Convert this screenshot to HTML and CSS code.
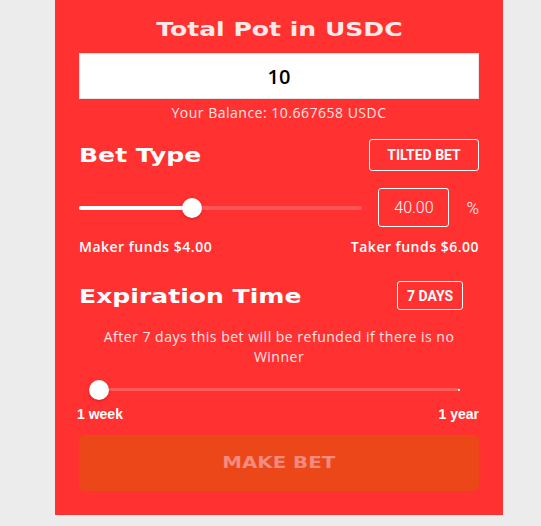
FILE: index.html
```html
<!DOCTYPE html>
<html>
<head>
<meta charset="utf-8">
<link rel="stylesheet" href="styles.css">
</head>
<body>
<div class="panel">
  <h1 class="title"><span class="wide">Total Pot in USDC</span></h1>
  <div class="pot-input">10</div>
  <div class="balance">Your Balance: 10.667658 USDC</div>

  <div class="row head-row bet-row">
    <h2 class="heading"><span class="wide">Bet Type</span></h2>
    <div class="chip chip-tilted">TILTED BET</div>
  </div>

  <div class="row slider-row">
    <div class="slider slider-main">
      <div class="track"></div>
      <div class="fill" style="width:40%"></div>
      <div class="thumb" style="left:40%"></div>
    </div>
    <div class="pct-input">40.00</div>
    <div class="pct">%</div>
  </div>

  <div class="row funds">
    <span>Maker funds $4.00</span>
    <span>Taker funds $6.00</span>
  </div>

  <div class="row head-row exp-row">
    <h2 class="heading"><span class="wide">Expiration Time</span></h2>
    <div class="chip chip-days">7 DAYS</div>
  </div>

  <p class="note">After 7 days this bet will be refunded if there is no Winner</p>

  <div class="slider slider-exp">
    <div class="track"></div>
    <div class="mark" style="left:100%"></div>
    <div class="thumb" style="left:0%"></div>
  </div>

  <div class="row range-labels">
    <span>1 week</span>
    <span>1 year</span>
  </div>

  <button class="make-bet"><span class="wide">MAKE BET</span></button>
</div>
</body>
</html>
```

FILE: styles.css
```css
* { box-sizing: border-box; }

html, body {
  margin: 0;
  padding: 0;
  background: #ececec;
}

.panel {
  margin-left: 55px;
  width: 448px;
  height: 515px;
  background: #ff3131;
  padding: 16px 24px 0 24px;
  display: flex;
  flex-direction: column;
  font-family: "Open Sans", "DejaVu Sans", sans-serif;
  letter-spacing: 0.5px;
  color: #fff;
}

.wide {
  display: inline-block;
  letter-spacing: 0;
  transform: scaleX(1.32);
  transform-origin: left center;
}

.title {
  margin: 0;
  text-align: center;
  font-family: "DejaVu Sans", sans-serif;
  font-weight: 700;
  font-size: 19px;
  line-height: 26px;
  color: #fbe9e9;
}

.title .wide {
  transform-origin: center center;
}

.pot-input {
  margin-top: 11px;
  height: 46px;
  background: #fff;
  border: 1px solid #e4e4e4;
  color: #000;
  font-family: "Open Sans", sans-serif;
  font-weight: 600;
  font-size: 20px;
  letter-spacing: 0;
  display: flex;
  align-items: center;
  justify-content: center;
}

.balance {
  margin-top: 4px;
  text-align: center;
  font-size: 14px;
  line-height: 20px;
  font-weight: 500;
  color: #ffe5e5;
}

.row {
  display: flex;
  align-items: center;
  justify-content: space-between;
}

.bet-row {
  margin-top: 16px;
  height: 32px;
}

.heading {
  margin: 0;
  font-family: "DejaVu Sans", sans-serif;
  font-weight: 700;
  font-size: 19px;
  line-height: 24px;
  color: #fff;
}

.chip {
  border: 1px solid #fff;
  border-radius: 3px;
  font-family: Roboto, sans-serif;
  font-weight: 700;
  font-size: 14px;
  letter-spacing: 0;
  display: flex;
  align-items: center;
  justify-content: center;
  color: #fff;
}

.chip-tilted {
  width: 110px;
  height: 32px;
}

.slider-row {
  margin-top: 17px;
  height: 39px;
  justify-content: flex-start;
}

.slider {
  position: relative;
  height: 20px;
}

.slider-main {
  flex: 1;
  margin-right: 16px;
}

.slider .track {
  position: absolute;
  left: 0;
  right: 0;
  top: 8px;
  height: 4px;
  border-radius: 2px;
  background: #ff5757;
}

.slider .fill {
  position: absolute;
  left: 0;
  top: 8px;
  height: 4px;
  border-radius: 2px;
  background: #fff;
}

.slider .thumb {
  position: absolute;
  top: 0;
  width: 20px;
  height: 20px;
  margin-left: -10px;
  border-radius: 50%;
  background: #fff;
  box-shadow: 0 1px 3px rgba(120, 0, 0, 0.35);
}

.slider .mark {
  position: absolute;
  top: 9px;
  width: 2px;
  height: 2px;
  margin-left: -1px;
  background: #fff;
}

.pct-input {
  width: 71px;
  height: 39px;
  border: 1px solid #fff;
  border-radius: 3px;
  display: flex;
  align-items: center;
  justify-content: center;
  font-family: Roboto, sans-serif;
  font-weight: 300;
  font-size: 16px;
  letter-spacing: 0;
  color: #fff;
}

.pct {
  margin-left: 17px;
  font-family: Roboto, sans-serif;
  font-weight: 300;
  font-size: 17px;
  letter-spacing: 0;
  color: #fff;
}

.funds {
  margin-top: 10px;
  font-size: 14px;
  line-height: 20px;
  font-weight: 600;
  color: #fff;
}

.exp-row {
  margin-top: 24px;
  height: 29px;
}

.chip-days {
  width: 66px;
  height: 29px;
  margin-right: 16px;
}

.note {
  margin: 17px 10px 0 10px;
  text-align: center;
  font-size: 14px;
  line-height: 20px;
  font-weight: 500;
  color: #ffe5e5;
}

.slider-exp {
  margin: 13px 20px 0 20px;
}

.slider-exp .track {
  top: 8px;
  height: 3px;
  background: #ff5a5a;
}

.range-labels {
  margin-top: 6px;
  margin-left: -2px;
  font-family: "Liberation Sans", Arial, sans-serif;
  font-weight: 700;
  font-size: 14px;
  line-height: 16px;
  letter-spacing: 0;
  color: #fff;
}

.make-bet {
  margin-top: 13px;
  height: 56px;
  width: 100%;
  border: none;
  border-radius: 6px;
  background: #ec4719;
  color: #f58b7f;
  font-family: "DejaVu Sans", sans-serif;
  font-weight: 700;
  font-size: 15px;
  display: flex;
  align-items: center;
  justify-content: center;
  padding: 0;
}

.make-bet .wide {
  transform-origin: center center;
}
```
